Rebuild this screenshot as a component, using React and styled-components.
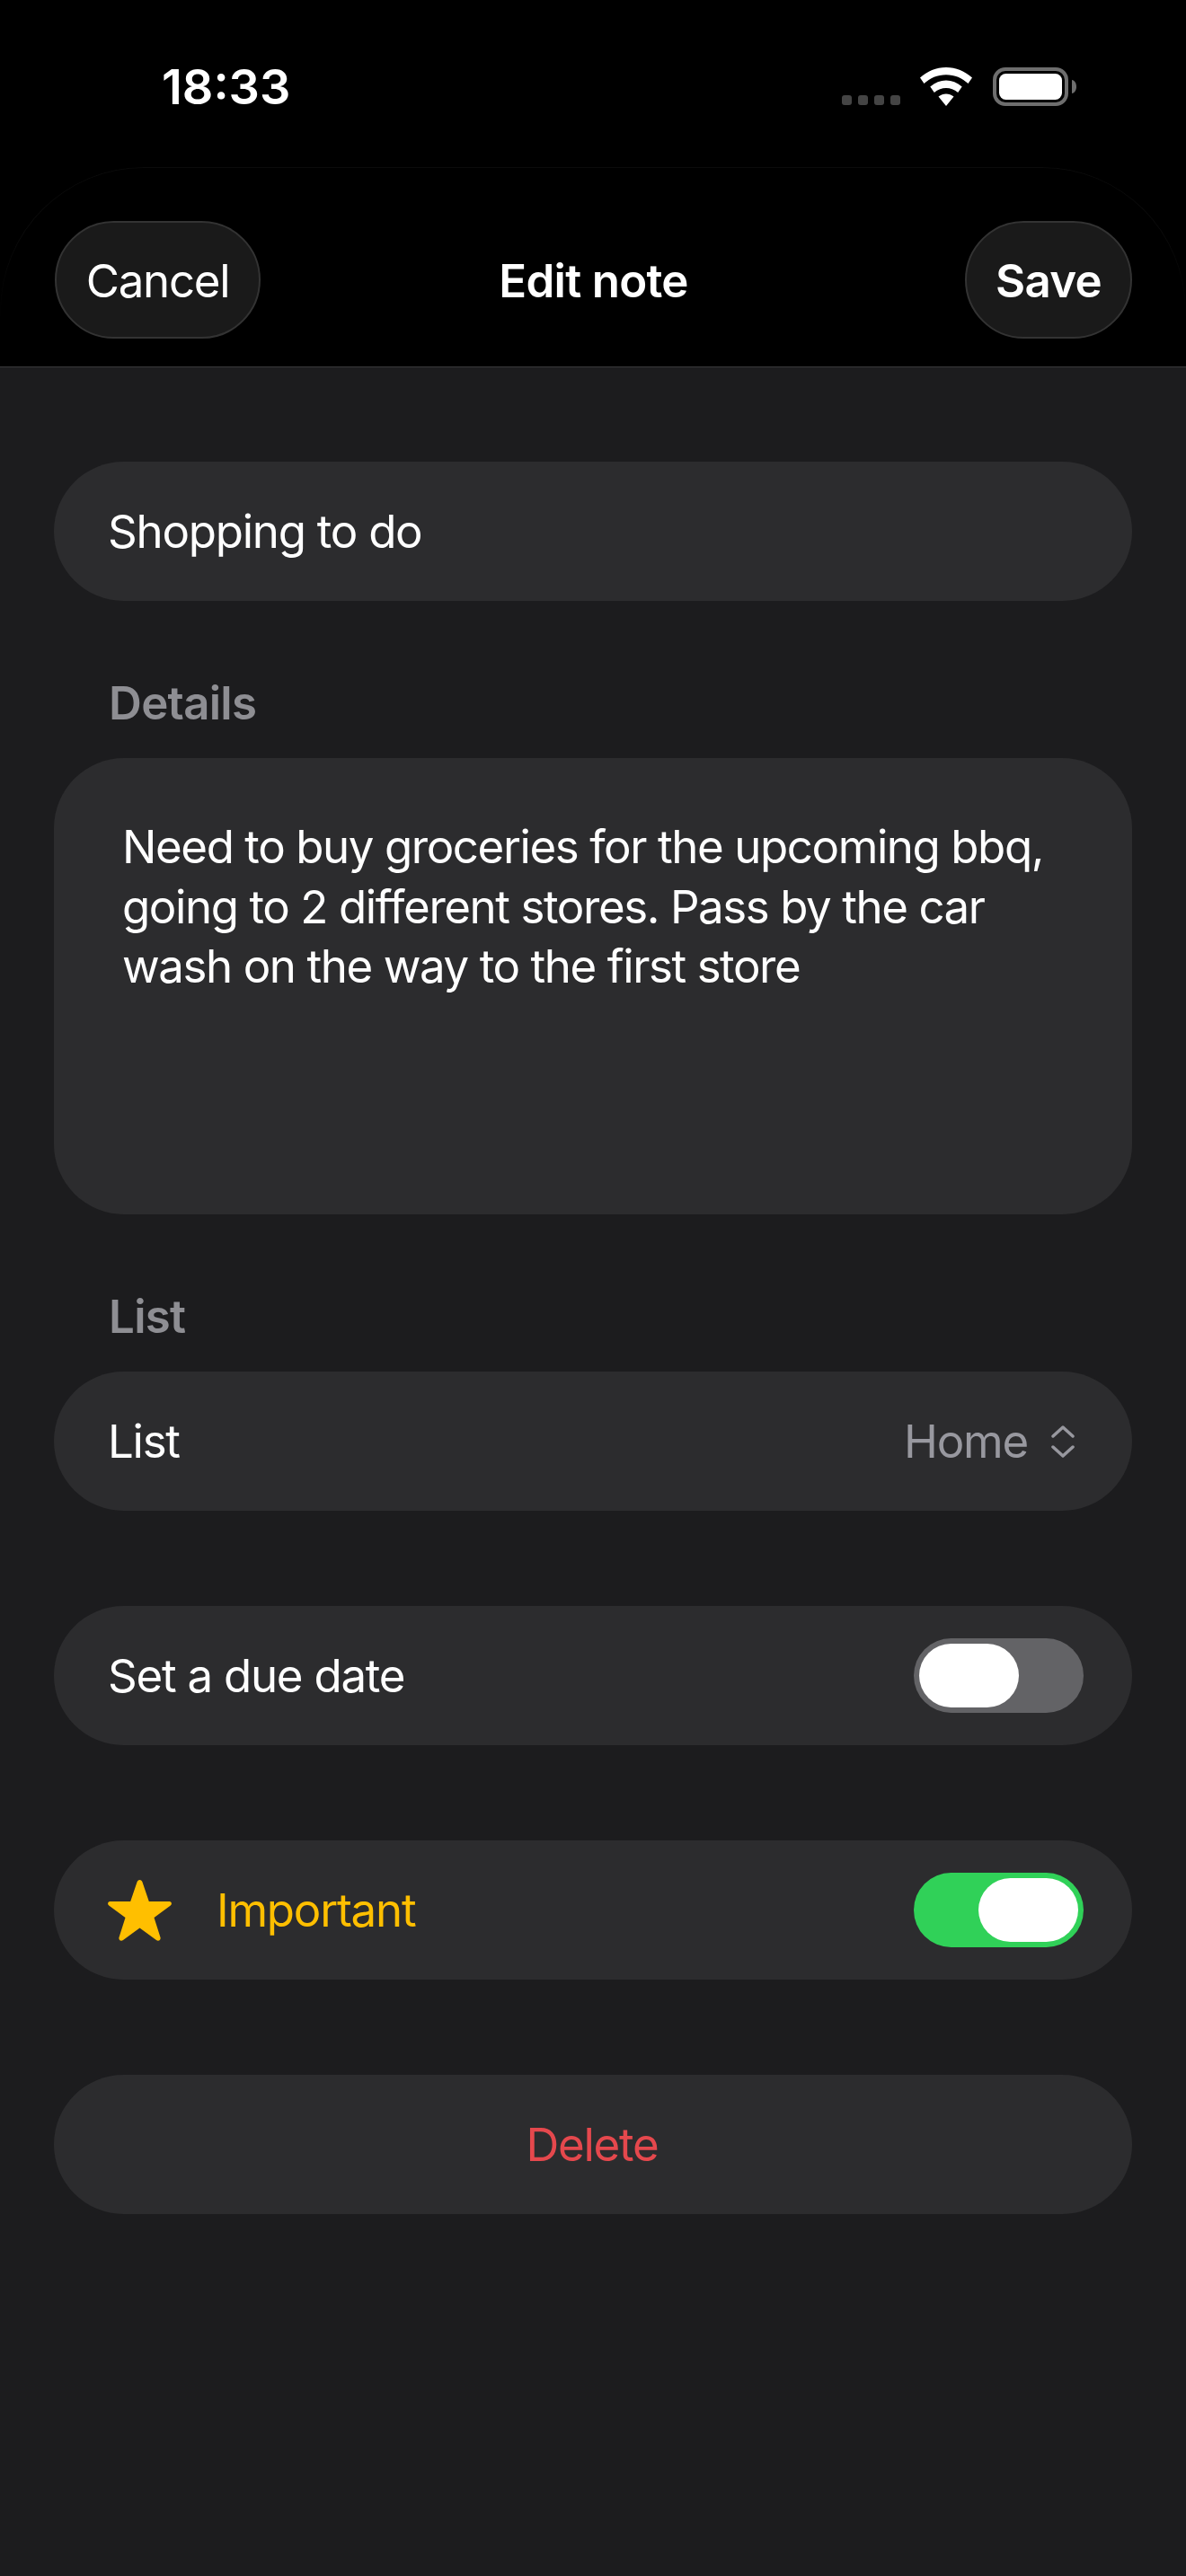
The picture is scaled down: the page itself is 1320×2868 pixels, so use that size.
import styled, { createGlobalStyle } from "styled-components";

const GlobalStyle = createGlobalStyle`
  html, body {
    margin: 0;
    padding: 0;
    background: #1c1c1e;
  }
  * {
    box-sizing: border-box;
  }
`
const Screen = styled.div`
  display: flex;
  flex-direction: column;
  width: 1320px;
  height: 2868px;
  overflow: hidden;
  background: #1c1c1e;
  color: #fff;
  font-family: Inter, "Liberation Sans", sans-serif;
  font-size: 51px;
  letter-spacing: -1.25px;
`
const StatusBar = styled.div`
  display: flex;
  justify-content: space-between;
  height: 186px;
  background: #000;
  padding: 75px 122px 0 180px;
`
const Time = styled.div`
  font-size: 54px;
  font-weight: 600;
  line-height: 44px;
  letter-spacing: 0;
`
const StatusIcons = styled.div`
  display: flex;
  align-items: flex-start;
`
const Signal = styled.div`
  display: flex;
  gap: 7px;
  margin-top: 31px;
  margin-right: 22px;
`
const SignalDot = styled.span`
  width: 11px;
  height: 11px;
  border-radius: 3px;
  background: #444;
`
const Wifi = styled.svg`
  width: 58px;
  height: 43px;
  margin-right: 23px;
`
const Battery = styled.svg`
  width: 93px;
  height: 43px;
`
const NavBar = styled.div`
  position: relative;
  display: grid;
  grid-template-columns: 1fr auto 1fr;
  align-items: center;
  height: 223px;
  padding: 60px 60px 31px 61px;
  background: #000;
  border-bottom: 1px solid #3a3a3c;

  &::before {
    content: "";
    position: absolute;
    top: 0;
    left: 0;
    right: 0;
    height: 170px;
    border: 1px solid #0b0b0b;
    border-bottom: 0;
    border-radius: 160px 160px 0 0;
    mask-image: linear-gradient(to bottom, #000 40%, transparent 100%);
  }
`
const NavLeft = styled.div`
  display: flex;
  justify-content: flex-start;
`
const NavRight = styled.div`
  display: flex;
  justify-content: flex-end;
`
const NavButton = styled.div`
  display: flex;
  align-items: center;
  justify-content: center;
  height: 131px;
  width: ${(p) => p.$width}px;
  padding-top: 2px;
  border-radius: 66px;
  background: #1a1a1a;
  border: 2px solid #333;
  font-weight: ${(p) => (p.$bold ? 600 : 400)};
  letter-spacing: ${(p) => (p.$bold ? -0.7 : -1.25)}px;
`
const Title = styled.div`
  padding-top: 2px;
  font-weight: 600;
  letter-spacing: -0.7px;
`
const Form = styled.div`
  display: flex;
  flex-direction: column;
  padding: 105px 60px 0;
`
const Row = styled.div`
  display: flex;
  align-items: center;
  justify-content: ${(p) => (p.$center ? "center" : "space-between")};
  height: 155px;
  padding: ${(p) => (p.$center ? "0 62px 0 60px" : "0 54px 0 60px")};
  margin-bottom: ${(p) => (p.$last ? 0 : 106)}px;
  border-radius: 78px;
  background: #2c2c2e;
  color: ${(p) => p.$color || "#fff"};
`
const SectionLabel = styled.div`
  height: 60px;
  line-height: 60px;
  margin: ${(p) => p.$top}px 0 31px 61px;
  color: #8e8e93;
  font-weight: 600;
  letter-spacing: -0.7px;
`
const TextBox = styled.div`
  height: 508px;
  padding: 66px 80px 0 76px;
  margin-bottom: 84px;
  border-radius: 78px;
  background: #2c2c2e;
  line-height: 66.5px;
  letter-spacing: -1.42px;
`
const Value = styled.div`
  display: flex;
  align-items: center;
  gap: 26px;
  padding-right: 10px;
  color: #98989f;
`
const RowStart = styled.div`
  display: flex;
  align-items: center;
  gap: 50px;
`
const Toggle = styled.div`
  display: flex;
  justify-content: ${(p) => (p.$on ? "flex-end" : "flex-start")};
  width: 189px;
  height: 83px;
  padding: 6px;
  border-radius: 42px;
  background: ${(p) => (p.$on ? "#30d158" : "#636366")};
`
const Thumb = styled.div`
  width: 111px;
  height: 71px;
  border-radius: 36px;
  background: #fff;
`

const App = () => {
  return (
    <Screen>
      <GlobalStyle />
      <StatusBar>
        <Time>18:33</Time>
        <StatusIcons>
          <Signal>
            <SignalDot />
            <SignalDot />
            <SignalDot />
            <SignalDot />
          </Signal>
          <Wifi viewBox="0 0 58 43" fill="#fff">
            <path d="M29 0C18 0 8 4.300 0 11.500L4.500 18C10.900 11.900 19.500 8.200 29 8.200S47.100 11.900 53.500 18L58 11.500C50 4.300 40 0 29 0Z" />
            <path d="M29 14.500C22.600 14.500 16.700 17 11.300 21.500L15.800 28C20 24.700 24.300 23 29 23S38 24.700 42.200 28L46.700 21.500C41.300 17 35.400 14.500 29 14.500Z" />
            <path d="M29 29.500C26 29.500 23.200 30.500 20.500 32.500L29 43L37.500 32.500C34.800 30.500 32 29.500 29 29.500Z" />
          </Wifi>
          <Battery viewBox="0 0 93 43">
            <rect x="2" y="2" width="80" height="39" rx="12" fill="none" stroke="#6e6e6e" strokeWidth="4" />
            <rect x="7" y="7" width="70" height="29" rx="7.500" fill="#fff" />
            <path d="M88 14C91 14.500 93 17.500 93 21.500S91 28.500 88 29Z" fill="#6e6e6e" />
          </Battery>
        </StatusIcons>
      </StatusBar>
      <NavBar>
        <NavLeft>
          <NavButton $width={229}>Cancel</NavButton>
        </NavLeft>
        <Title>Edit note</Title>
        <NavRight>
          <NavButton $width={186} $bold>Save</NavButton>
        </NavRight>
      </NavBar>
      <Form>
        <Row $last>Shopping to do</Row>
        <SectionLabel $top={84}>Details</SectionLabel>
        <TextBox>
          Need to buy groceries for the upcoming bbq, going to 2 different stores. Pass by the car wash on the way to the first store
        </TextBox>
        <SectionLabel $top={0}>List</SectionLabel>
        <Row>
          List
          <Value>
            Home
            <svg width="26" height="38" viewBox="0 0 26 38" fill="none" stroke="#98989f" strokeWidth="3.500" strokeLinecap="round" strokeLinejoin="round">
              <path d="M2 13L13 3L24 13" />
              <path d="M2 25L13 35L24 25" />
            </svg>
          </Value>
        </Row>
        <Row>
          Set a due date
          <Toggle>
            <Thumb />
          </Toggle>
        </Row>
        <Row $color="#ffbf00">
          <RowStart>
            <svg width="71" height="68" viewBox="0 0 71 68" fill="#ffbf00">
              <path d="M35.500 0C37 0 38 1 38.500 2.500L45.800 24L68.500 24C71 24 71.800 27 69.800 28.500L51.500 42L58.500 64C59.300 66.800 56.500 68.800 54 67L35.500 53.500L17 67C14.500 68.800 11.700 66.800 12.500 64L19.500 42L1.200 28.500C-0.800 27 0 24 2.500 24L25.200 24L32.500 2.500C33 1 34 0 35.500 0Z" />
            </svg>
            Important
          </RowStart>
          <Toggle $on>
            <Thumb />
          </Toggle>
        </Row>
        <Row $center $last $color="#e5484d">Delete</Row>
      </Form>
    </Screen>
  );
};
export default App;
